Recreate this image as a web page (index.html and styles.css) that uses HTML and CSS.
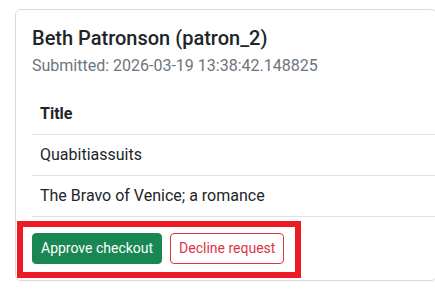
FILE: index.html
```html
<!DOCTYPE html>
<html lang="en">
<head>
<meta charset="utf-8">
<title>Checkout request</title>
<link rel="stylesheet" href="styles.css">
</head>
<body>
<div class="card">
  <div class="card-body">
    <h5 class="card-title">Beth Patronson (patron_2)</h5>
    <p class="card-subtitle">Submitted: 2026-03-19 13:38:42.148825</p>
    <table class="items">
      <thead>
        <tr><th>Title</th></tr>
      </thead>
      <tbody>
        <tr><td>Quabitiassuits</td></tr>
        <tr><td>The Bravo of Venice; a romance</td></tr>
      </tbody>
    </table>
    <div class="actions">
      <button class="btn btn-approve" type="button">Approve checkout</button>
      <button class="btn btn-decline" type="button">Decline request</button>
      <span class="highlight" aria-hidden="true"></span>
    </div>
  </div>
</div>
</body>
</html>
```
FILE: styles.css
```css
html, body {
  overflow: hidden;
}
body {
  margin: 0;
  padding: 9px 0 0 15px;
  background: #fff;
  color: #212529;
  font-family: Roboto, "Liberation Sans", sans-serif;
  font-size: 16px;
  line-height: 1.5;
}
.card {
  box-sizing: border-box;
  width: 422px;
  border: 1px solid #d9d9d9;
  border-radius: 6px;
  background: #fff;
}
.card-body {
  padding: 16px;
}
.card-title {
  margin: 0 0 8px;
  font-size: 20px;
  line-height: 1.2;
  font-weight: 500;
  color: #212529;
}
.card-subtitle {
  margin: -4px 0 16px;
  color: #6c757d;
  font-size: 16px;
  line-height: 1.5;
}
.items {
  width: calc(100% + 16px);
  border-collapse: collapse;
  margin-bottom: 16px;
}
.items th,
.items td {
  padding: 8px;
  text-align: left;
  border-bottom: 1px solid #dee2e6;
  line-height: 24px;
}
.items th {
  font-weight: 700;
}
.actions {
  position: relative;
  display: inline-flex;
  gap: 8px;
}
.btn {
  font-family: inherit;
  font-size: 14px;
  line-height: 21px;
  padding: 4px 8px;
  border: 1px solid transparent;
  border-radius: 4px;
  cursor: pointer;
}
.btn-approve {
  background: #198754;
  border-color: #198754;
  color: #fff;
}
.btn-decline {
  background: #fff;
  border-color: #dc3545;
  color: #dc3545;
}
.highlight {
  position: absolute;
  top: -12px;
  left: -15px;
  right: -17px;
  bottom: -14px;
  border: 6px solid #ed1c24;
  pointer-events: none;
}
```
